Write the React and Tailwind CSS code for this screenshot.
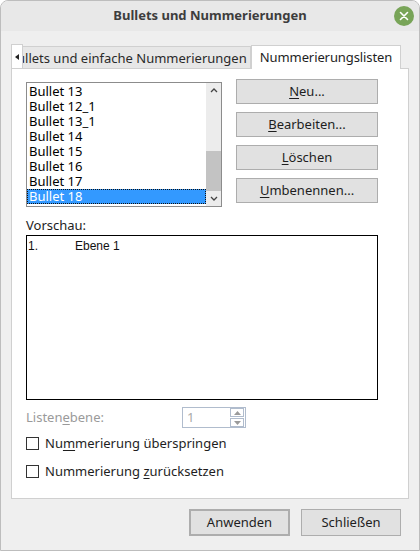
import React from 'react';

const items = ['Bullet 13', 'Bullet 12_1', 'Bullet 13_1', 'Bullet 14', 'Bullet 15', 'Bullet 16', 'Bullet 17', 'Bullet 18'];

function U({ children }) {
  return <span className="underline underline-offset-2">{children}</span>;
}

function Btn({ children, className = '' }) {
  return (
    <div className={`h-[25px] flex items-center justify-center bg-[#e1e1e1] border border-[#adadad] text-[13px] text-[#1e1e1e] ${className}`}>
      {children}
    </div>
  );
}

function Check({ children }) {
  return (
    <div className="flex items-center gap-[6px] h-[14px]">
      <div className="w-[13px] h-[13px] border border-[#333] bg-white" />
      <span className="text-[13px] leading-[14px] text-[#1e1e1e]">{children}</span>
    </div>
  );
}

export default function App() {
  return (
    <div className="w-[420px] h-[551px] bg-[#efefef] border border-[#bdbdbd] rounded-t-[8px] overflow-hidden flex flex-col font-['Noto_Sans',sans-serif]">
      {/* title bar */}
      <div className="h-[30px] shrink-0 bg-[#e8e8e8] relative flex items-center justify-center">
        <span className="text-[13px] font-bold text-[#3d3d3d]">Bullets und Nummerierungen</span>
        <svg className="absolute right-[5px] top-[5px]" width="20" height="20" viewBox="0 0 20 20">
          <circle cx="10" cy="10" r="10" fill="#78a458" />
          <path d="M6.5 6.5L13.5 13.5M13.5 6.5L6.5 13.5" stroke="#ffffff" strokeWidth="1.6" strokeLinecap="round" />
        </svg>
      </div>

      <div className="flex-1 px-[10px] pt-[13px] flex flex-col">
        {/* tabs */}
        <div className="h-[24px] flex items-end relative z-10">
          <div className="w-[12px] h-[24px] bg-white border border-[#d0d0d0] border-b-0 flex items-center justify-center">
            <svg width="4" height="6" viewBox="0 0 4 6"><path d="M4 0L0 3L4 6Z" fill="#222" /></svg>
          </div>
          <div className="w-[228px] h-[22px] bg-[#e7e7e7] border-t border-r border-[#d0d0d0] flex items-center overflow-hidden">
            <span className="text-[13px] leading-[18px] text-[#2a2a2a] whitespace-nowrap -ml-[6px]">ullets und einfache Nummerierungen</span>
          </div>
          <div className="w-[150px] h-[24px] bg-white border border-[#d0d0d0] border-b-0 flex items-center justify-center -mb-px">
            <span className="text-[13px] text-[#1e1e1e] tracking-[-0.1px]">Nummerierungslisten</span>
          </div>
        </div>

        {/* panel */}
        <div className="h-[431px] bg-white border border-[#d0d0d0] pl-[14px] pr-[21px] pt-[13px] flex flex-col">
          <div className="flex gap-[14px]">
            <div className="w-[196px] h-[125px] border border-[#8c8c8c] flex">
              <div className="flex-1 flex flex-col pt-[1px]">
                {items.map((it, i) =>
                  i === 7 ? (
                    <div key={it} className="h-[15px] bg-[#3399ff] text-white border border-dotted border-[#111] flex items-center pl-[1px] text-[13px] leading-[13px]">{it}</div>
                  ) : (
                    <div key={it} className="h-[15px] flex items-center pl-[2px] text-[13px] text-black leading-[15px]">{it}</div>
                  )
                )}
              </div>
              <div className="w-[15px] bg-[#ececec] flex flex-col">
                <div className="h-[14px] flex items-center justify-center">
                  <svg width="8" height="5" viewBox="0 0 8 5"><path d="M1 4L4 1L7 4" stroke="#444" strokeWidth="1.3" fill="none" /></svg>
                </div>
                <div className="h-[54px]" />
                <div className="h-[40px] bg-[#c3c3c3]" />
                <div className="flex-1 flex items-center justify-center">
                  <svg width="8" height="5" viewBox="0 0 8 5"><path d="M1 1L4 4L7 1" stroke="#444" strokeWidth="1.3" fill="none" /></svg>
                </div>
              </div>
            </div>
            <div className="w-[142px] flex flex-col gap-[8px] -mt-[3px]">
              <Btn><U>N</U>eu...</Btn>
              <Btn><U>B</U>earbeiten...</Btn>
              <Btn><U>L</U>öschen</Btn>
              <Btn><U>U</U>mbenennen...</Btn>
            </div>
          </div>

          <div className="mt-[9px] text-[13px] text-[#1e1e1e] leading-[18px]">Vorschau:</div>
          <div className="mt-[1px] w-[352px] h-[165px] border-[1.5px] border-black bg-white flex items-start pt-[3px] pl-[1px] font-['Liberation_Sans',sans-serif] text-[12px] leading-[14px] text-[#111]">
            <span className="w-[47px]">1.</span>
            <span>Ebene 1</span>
          </div>

          <div className="mt-[7px] flex items-center h-[21px]">
            <span className="w-[156px] text-[13px] text-[#9a9a9a]">Listen<span className="underline underline-offset-2">e</span>bene:</span>
            <div className="w-[64px] h-[21px] border border-[#b0bccd] flex items-center">
              <span className="flex-1 pl-[4px] text-[13px] text-[#a9a9a9]">1</span>
              <div className="w-[14px] h-[19px] mr-[1px] flex flex-col gap-[1px]">
                <div className="flex-1 border border-[#b0bccd] flex items-center justify-center">
                  <svg width="7" height="4" viewBox="0 0 7 4"><path d="M0 4L3.5 0L7 4Z" fill="#9a9a9a" /></svg>
                </div>
                <div className="flex-1 border border-[#b0bccd] flex items-center justify-center">
                  <svg width="7" height="4" viewBox="0 0 7 4"><path d="M0 0L3.5 4L7 0Z" fill="#9a9a9a" /></svg>
                </div>
              </div>
            </div>
          </div>

          <div className="mt-[8px] flex flex-col gap-[14px]">
            <Check>Nu<U>m</U>merierung überspringen</Check>
            <Check>Nummerierung <U>z</U>urücksetzen</Check>
          </div>
        </div>

        {/* footer */}
        <div className="flex justify-end gap-[11px] mt-[10px] pr-[8px]">
          <Btn className="w-[101px] h-[27px] border-2 border-[#0a78d7]">Anwenden</Btn>
          <Btn className="w-[100px] h-[27px]">Schließen</Btn>
        </div>
      </div>
    </div>
  );
}
